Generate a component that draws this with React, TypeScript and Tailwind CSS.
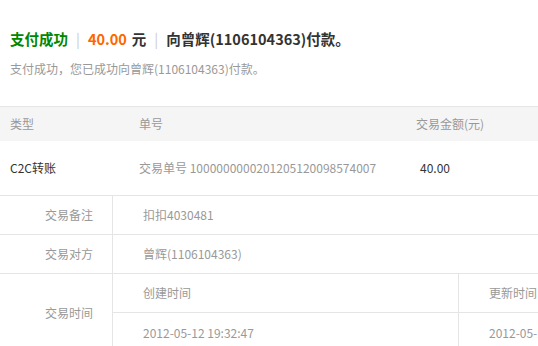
// Payment result page
import React from "react";

const font = { fontFamily: '"Noto Sans CJK SC", "Noto Sans", sans-serif' };

function InfoRow({ label, value }: { label: string; value: string }) {
  return (
    <div className="grid grid-cols-[113px_1fr] border-b border-[#e5e5e5] h-[39px]">
      <div className="border-r border-[#e5e5e5] flex items-center justify-end pr-[19px] text-[#999]">{label}</div>
      <div className="flex items-center pl-[30px] text-[#999]">{value}</div>
    </div>
  );
}

export default function App() {
  return (
    <div className="w-[538px] h-[346px] overflow-hidden bg-white text-[12px]" style={font}>
      <div className="pt-[29px] pl-[10px]">
        <p className="text-[14.5px] font-bold leading-[20px] text-[#333] flex items-center">
          <span className="text-[#080]">支付成功</span>
          <span className="text-[#ccc] font-normal mx-[8px]">|</span>
          <span className="text-[#f60]">40.00</span>
          <span className="ml-[5px]">元</span>
          <span className="text-[#ccc] font-normal mx-[8px]">|</span>
          <span>向曾辉(1106104363)付款。</span>
        </p>
        <p className="mt-[12px] text-[#999] leading-[16px]">支付成功，您已成功向曾辉(1106104363)付款。</p>
      </div>

      <div className="mt-[29px] w-[700px]">
        <div className="grid grid-cols-[139px_277px_1fr] h-[35px] bg-[#f5f5f5] border-t border-[#e5e5e5] items-center text-[#999]">
          <div className="pl-[10px]">类型</div>
          <div>单号</div>
          <div>交易金额(元)</div>
        </div>
        <div className="grid grid-cols-[139px_281px_1fr] h-[55px] items-center border-b border-[#e5e5e5]">
          <div className="pl-[10px] text-[#333]">C2C转账</div>
          <div className="text-[#999]">交易单号 1000000000201205120098574007</div>
          <div className="text-[#333]">40.00</div>
        </div>
        <InfoRow label="交易备注" value="扣扣4030481" />
        <InfoRow label="交易对方" value="曾辉(1106104363)" />
        <div className="grid grid-cols-[113px_1fr] border-b border-[#e5e5e5]">
          <div className="border-r border-[#e5e5e5] flex items-center justify-end pr-[19px] text-[#999]">交易时间</div>
          <div className="grid grid-cols-[346px_1fr] text-[#999]">
            <div className="h-[39px] flex items-center pl-[30px] border-r border-b border-[#e5e5e5]">创建时间</div>
            <div className="h-[39px] flex items-center pl-[30px] border-b border-[#e5e5e5]">更新时间</div>
            <div className="h-[39px] flex items-center pl-[30px] border-r border-[#e5e5e5]">2012-05-12 19:32:47</div>
            <div className="h-[39px] flex items-center pl-[30px]">2012-05-12 19:32:47</div>
          </div>
        </div>
      </div>
    </div>
  );
}
